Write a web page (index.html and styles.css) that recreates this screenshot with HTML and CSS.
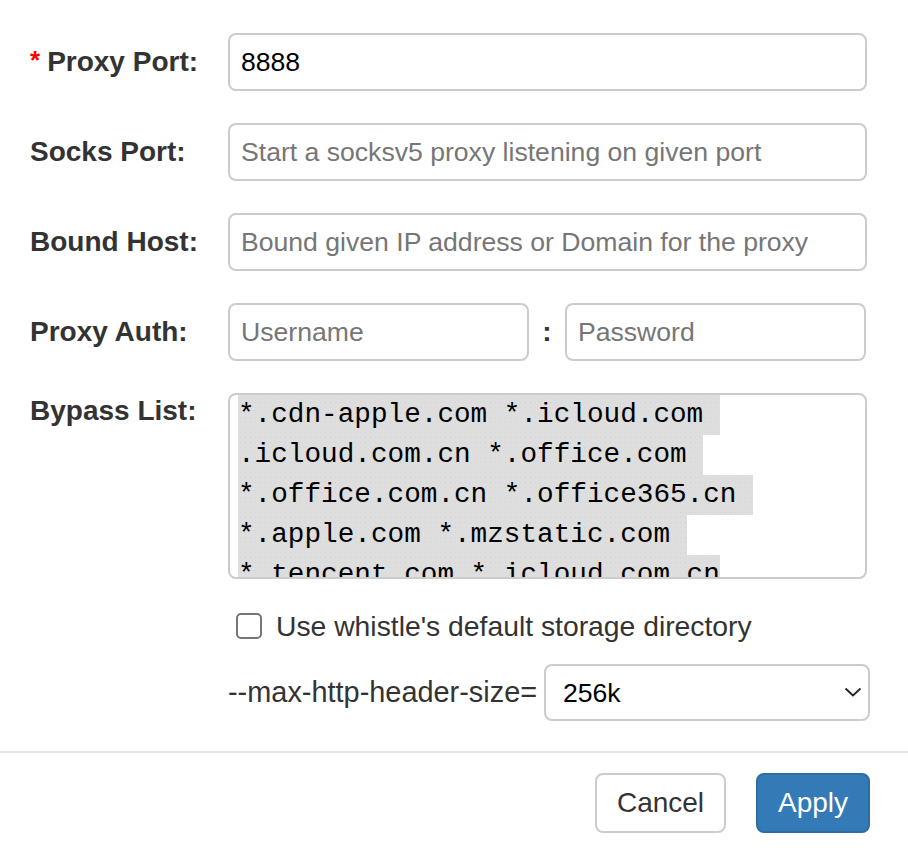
FILE: index.html
```html
<!DOCTYPE html>
<html>
<head>
<meta charset="utf-8">
<link rel="stylesheet" href="styles.css">
</head>
<body>
<div class="dialog">
  <div class="dialog-body">
    <div class="row">
      <label class="lbl"><span class="req">*</span>Proxy Port:</label>
      <input class="ctl" type="text" value="8888">
    </div>
    <div class="row">
      <label class="lbl">Socks Port:</label>
      <input class="ctl" type="text" placeholder="Start a socksv5 proxy listening on given port">
    </div>
    <div class="row">
      <label class="lbl">Bound Host:</label>
      <input class="ctl" type="text" placeholder="Bound given IP address or Domain for the proxy">
    </div>
    <div class="row">
      <label class="lbl">Proxy Auth:</label>
      <div class="auth">
        <input class="ctl half" type="text" placeholder="Username">
        <span class="colon">:</span>
        <input class="ctl half" type="text" placeholder="Password">
      </div>
    </div>
    <div class="row row-top">
      <label class="lbl lbl-top">Bypass List:</label>
      <div class="area">
        <span class="ln">*.cdn-apple.com *.icloud.com </span>
        <span class="ln">.icloud.com.cn *.office.com </span>
        <span class="ln">*.office.com.cn *.office365.cn </span>
        <span class="ln">*.apple.com *.mzstatic.com </span>
        <span class="ln">*.tencent.com *.icloud.com.cn</span>
      </div>
    </div>
    <div class="check-row">
      <input class="chk" type="checkbox" id="dir">
      <label class="chk-label" for="dir">Use whistle's default storage directory</label>
    </div>
    <div class="select-row">
      <span class="opt-label">--max-http-header-size=</span>
      <div class="select-wrap">
        <select class="sel">
          <option>256k</option>
        </select>
        <svg class="chev" width="18" height="10" viewBox="0 0 18 10"><path d="M1.5 1.5 L9 8.5 L16.5 1.5" fill="none" stroke="#222" stroke-width="1.8"/></svg>
      </div>
    </div>
  </div>
  <div class="dialog-footer">
    <button class="btn btn-default">Cancel</button>
    <button class="btn btn-primary">Apply</button>
  </div>
</div>
</body>
</html>
```

FILE: styles.css
```css
html, body {
  margin: 0;
  padding: 0;
  background: #fff;
}
body {
  font-family: "Liberation Sans", Arial, sans-serif;
  color: #333;
}
.dialog {
  width: 908px;
  height: 848px;
  overflow: hidden;
}
.dialog-body {
  padding: 33px 41px 0 30px;
}
.row {
  display: flex;
  align-items: center;
  height: 58px;
  margin-bottom: 32px;
}
.row-top {
  align-items: flex-start;
  height: auto;
  margin-bottom: 0;
}
.lbl {
  width: 198px;
  flex: none;
  font-size: 28px;
  font-weight: bold;
  color: #333;
  white-space: nowrap;
}
.lbl-top {
  line-height: 34px;
  margin-top: 1px;
}
.req {
  color: #f00;
  font-size: 26px;
  margin-right: 7px;
  position: relative;
  top: -2px;
}
.ctl {
  flex: 1 1 0;
  width: 0;
  min-width: 0;
  height: 58px;
  box-sizing: border-box;
  border: 2px solid #ccc;
  border-radius: 8px;
  padding: 0 11px;
  font-family: "Liberation Sans", Arial, sans-serif;
  font-size: 26.6px;
  color: #000;
  background: #fff;
  outline: none;
}
.ctl::placeholder {
  color: #767676;
}
.auth {
  flex: 1 1 0;
  min-width: 0;
  display: flex;
  align-items: center;
  margin-right: 1px;
}
.colon {
  width: 36px;
  flex: none;
  text-align: center;
  font-size: 28px;
  font-weight: bold;
  color: #333;
}
.area {
  flex: 1 1 0;
  min-width: 0;
  height: 186px;
  box-sizing: border-box;
  border: 2px solid #ccc;
  border-radius: 8px;
  padding: 0 8px;
  overflow: hidden;
  font-family: "Liberation Mono", "Courier New", monospace;
  font-size: 27.7px;
  line-height: 40px;
  color: #000;
}
.ln {
  display: block;
  width: fit-content;
  white-space: pre;
  background-color: #dedede;
  background-image: radial-gradient(circle, rgba(0,0,0,0.05) 0.6px, transparent 0.8px);
  background-size: 5px 5px;
}
.check-row {
  display: flex;
  align-items: center;
  height: 40px;
  margin: 27px 0 0 206px;
}
.chk {
  appearance: none;
  -webkit-appearance: none;
  width: 26px;
  height: 26px;
  box-sizing: border-box;
  border: 2px solid #767676;
  border-radius: 5px;
  background: #fff;
  margin: 0 14px 0 0;
  flex: none;
}
.chk-label {
  font-size: 28.3px;
  color: #333;
}
.select-row {
  display: flex;
  align-items: center;
  margin: 18px -3px 0 198px;
}
.opt-label {
  flex: 1;
  font-size: 28.9px;
  color: #333;
  white-space: nowrap;
}
.select-wrap {
  flex: none;
  width: 326px;
  position: relative;
}
.sel {
  appearance: none;
  -webkit-appearance: none;
  display: block;
  width: 100%;
  height: 57px;
  box-sizing: border-box;
  border: 2px solid #ccc;
  border-radius: 8px;
  padding: 0 17px;
  font-family: "Liberation Sans", Arial, sans-serif;
  font-size: 26.6px;
  color: #000;
  background: #fff;
  outline: none;
}
.chev {
  position: absolute;
  right: 8px;
  top: 23px;
  pointer-events: none;
}
.dialog-footer {
  margin-top: 30px;
  border-top: 2px solid #e5e5e5;
  padding: 20px 38px 0 0;
  display: flex;
  justify-content: flex-end;
  gap: 30px;
}
.btn {
  height: 60px;
  box-sizing: border-box;
  border-radius: 8px;
  font-family: "Liberation Sans", Arial, sans-serif;
  font-size: 28px;
  padding: 0;
  cursor: pointer;
}
.btn-default {
  width: 131px;
  background: #fff;
  border: 2px solid #ccc;
  color: #333;
}
.btn-primary {
  width: 114px;
  background: #337ab7;
  border: 2px solid #2e6da4;
  color: #fff;
}
```
